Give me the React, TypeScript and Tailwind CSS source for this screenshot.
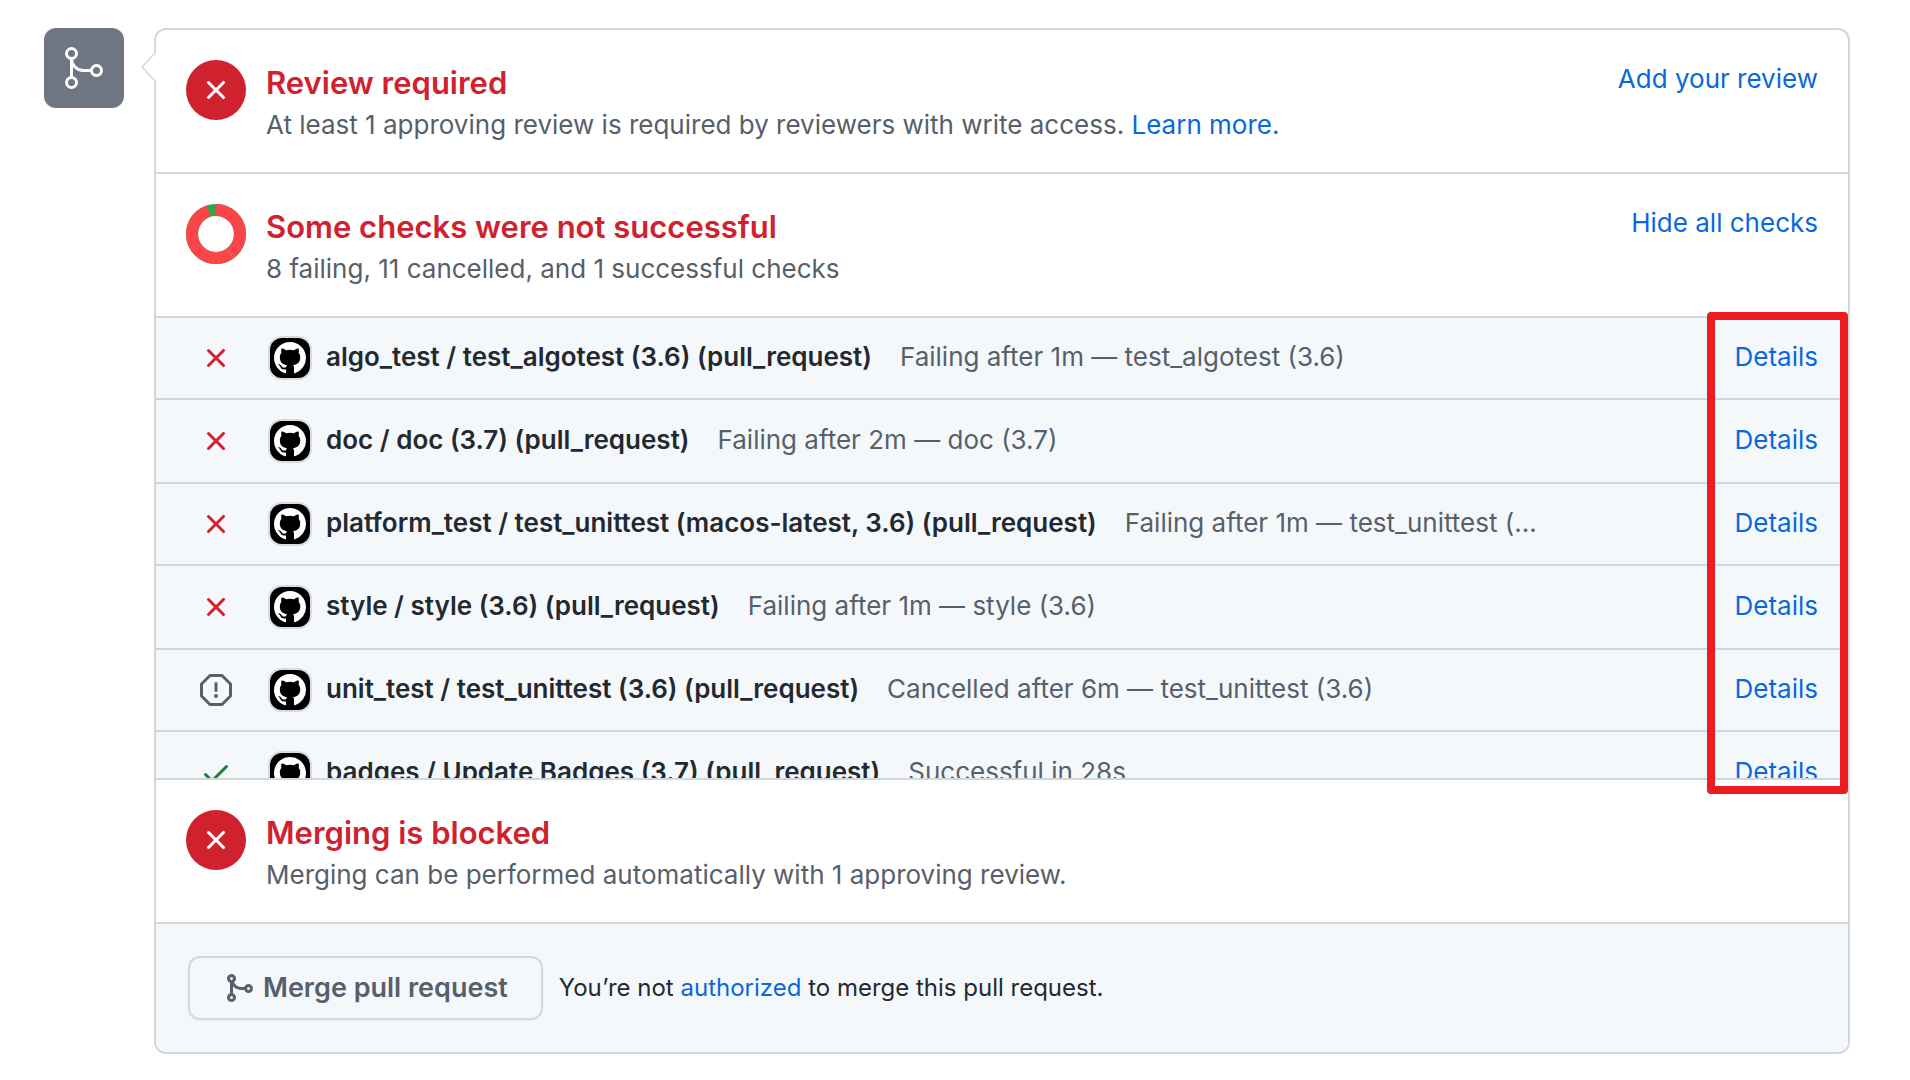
import React from 'react';

const ICONS = {
  x: 'M3.72 3.72a.75.75 0 011.06 0L8 6.94l3.22-3.22a.75.75 0 111.06 1.06L9.06 8l3.22 3.22a.75.75 0 11-1.06 1.06L8 9.06l-3.22 3.22a.75.75 0 01-1.06-1.06L6.94 8 3.72 4.78a.75.75 0 010-1.06z',
  check:
    'M13.78 4.22a.75.75 0 010 1.06l-7.25 7.25a.75.75 0 01-1.06 0L2.22 9.28a.75.75 0 011.06-1.06L6 10.94l6.72-6.72a.75.75 0 011.06 0z',
  stop: 'M4.47.22A.75.75 0 015 0h6a.75.75 0 01.53.22l4.25 4.25c.141.14.22.331.22.53v6a.75.75 0 01-.22.53l-4.25 4.25A.75.75 0 0111 16H5a.75.75 0 01-.53-.22L.22 11.53A.75.75 0 010 11V5a.75.75 0 01.22-.53L4.47.22zm.84 1.28L1.5 5.31v5.38l3.81 3.81h5.38l3.81-3.81V5.31L10.69 1.5H5.31zM8 4a.75.75 0 01.75.75v3.5a.75.75 0 01-1.5 0v-3.5A.75.75 0 018 4zm0 8a1 1 0 100-2 1 1 0 000 2z',
  merge:
    'M5 3.254V3.25v.005a.75.75 0 110-.005v.004zm.45 1.9a2.25 2.25 0 10-1.95.218v5.256a2.25 2.25 0 101.5 0V7.123A5.735 5.735 0 009.25 9h1.378a2.251 2.251 0 100-1.5H9.25a4.25 4.25 0 01-3.8-2.346zM12.75 9a.75.75 0 100-1.5.75.75 0 000 1.5zm-8.5 4.5a.75.75 0 100-1.5.75.75 0 000 1.5z',
  github:
    'M8 0C3.58 0 0 3.58 0 8c0 3.54 2.29 6.53 5.47 7.59.4.07.55-.17.55-.38 0-.19-.01-.82-.01-1.49-2.01.37-2.53-.49-2.69-.94-.09-.23-.48-.94-.82-1.13-.28-.15-.68-.52-.01-.53.63-.01 1.08.58 1.23.82.72 1.21 1.87.87 2.33.66.07-.52.28-.87.51-1.07-1.78-.2-3.64-.89-3.64-3.95 0-.87.31-1.59.82-2.15-.08-.2-.36-1.02.08-2.12 0 0 .67-.21 2.2.82.64-.18 1.32-.27 2-.27.68 0 1.36.09 2 .27 1.53-1.04 2.2-.82 2.2-.82.44 1.1.16 1.92.08 2.12.51.56.82 1.27.82 2.15 0 3.07-1.87 3.75-3.65 3.95.29.25.54.73.54 1.48 0 1.07-.01 1.93-.01 2.2 0 .21.15.46.55.38A8.013 8.013 0 0016 8c0-4.42-3.58-8-8-8z',
};

type IconName = keyof typeof ICONS;

function Icon({ name, className = '' }: { name: IconName; className?: string }) {
  return (
    <svg viewBox="0 0 16 16" aria-hidden="true" className={`size-8 shrink-0 fill-current ${className}`}>
      <path fillRule="evenodd" d={ICONS[name]} />
    </svg>
  );
}

function TimelineBadge() {
  return (
    <div className="flex size-20 shrink-0 items-center justify-center rounded-xl bg-[#6e7781] text-white">
      <svg viewBox="0 0 24 24" aria-hidden="true" className="size-12" fill="none" stroke="currentColor" strokeWidth="1.5">
        <circle cx="5.75" cy="4.75" r="2.5" />
        <circle cx="5.75" cy="19.25" r="2.5" />
        <circle cx="18.25" cy="13.25" r="2.5" />
        <path d="M5.75 7.25v9.5M5.75 7.25a6 6 0 006 6h4" />
      </svg>
    </div>
  );
}

function BlockedBadge() {
  return (
    <div className="flex size-[60px] shrink-0 items-center justify-center rounded-full bg-[#cf222e] text-white">
      <Icon name="x" />
    </div>
  );
}

function ChecksDonut() {
  return (
    <svg viewBox="0 0 60 60" aria-hidden="true" className="size-[60px] shrink-0" fill="none" strokeWidth="12">
      <g transform="rotate(-90 30 30)">
        <circle cx="30" cy="30" r="24" stroke="#2da44e" />
        <circle cx="30" cy="30" r="24" pathLength="100" stroke="#fa4549" strokeDasharray="95 100" />
      </g>
      <path d="M40.6 44.6 47.6 54.3" stroke="#fc8183" strokeWidth="0.5" />
    </svg>
  );
}

function Link({ children, className = '' }: { children: React.ReactNode; className?: string }) {
  return (
    <a href="#" className={`text-[#0969da] hover:underline ${className}`}>
      {children}
    </a>
  );
}

interface SectionProps {
  icon: React.ReactNode;
  title: string;
  action?: React.ReactNode;
  children: React.ReactNode;
}

function Section({ icon, title, action, children }: SectionProps) {
  return (
    <section className="flex gap-5 px-[30px] pt-[30px] pb-7">
      {icon}
      <div className="min-w-0 grow">
        <h3 className="text-[31px] leading-[46px] font-semibold text-[#cf222e]">{title}</h3>
        <p className="text-[26px] leading-[38px] text-[#57606a]">{children}</p>
      </div>
      {action && <div className="text-[26px] leading-[38px] whitespace-nowrap">{action}</div>}
    </section>
  );
}

interface Check {
  name: string;
  status: string;
  state: IconName;
}

const CHECKS: Check[] = [
  { name: 'algo_test / test_algotest (3.6) (pull_request)', status: 'Failing after 1m — test_algotest (3.6)', state: 'x' },
  { name: 'doc / doc (3.7) (pull_request)', status: 'Failing after 2m — doc (3.7)', state: 'x' },
  {
    name: 'platform_test / test_unittest (macos-latest, 3.6) (pull_request)',
    status: 'Failing after 1m — test_unittest (macos-latest, 3.6)',
    state: 'x',
  },
  { name: 'style / style (3.6) (pull_request)', status: 'Failing after 1m — style (3.6)', state: 'x' },
  { name: 'unit_test / test_unittest (3.6) (pull_request)', status: 'Cancelled after 6m — test_unittest (3.6)', state: 'stop' },
  { name: 'badges / Update Badges (3.7) (pull_request)', status: 'Successful in 28s', state: 'check' },
];

const STATE_COLOR: Partial<Record<IconName, string>> = {
  x: 'text-[#cf222e]',
  stop: 'text-[#57606a]',
  check: 'text-[#1a7f37]',
};

function CheckRow({ name, status, state }: Check) {
  return (
    <li className="flex items-center border-b-2 border-[#d0d7de] pr-[30px] pl-11 odd:h-[82px] even:h-[84px]">
      <Icon name={state} className={STATE_COLOR[state]} />
      <span className="mr-4 ml-[38px] flex size-10 shrink-0 items-center justify-center rounded-xl bg-black text-white ring-2 ring-[#d8dce0]">
        <Icon name="github" />
      </span>
      <p className="mr-48 flex min-w-0 grow gap-7 pb-0.5 text-[26px] leading-[38px] whitespace-nowrap">
        <strong className="font-semibold text-[#24292f]">{name}</strong>
        <span className="truncate text-[#57606a]">{status}</span>
      </p>
      <Link className="pb-0.5 text-[26px] leading-[38px]">Details</Link>
    </li>
  );
}

export default function App() {
  return (
    <main className="flex min-h-screen items-start gap-[30px] bg-white py-7 pr-[60px] pl-11 font-['Inter','Liberation_Sans',sans-serif]">
      <TimelineBadge />
      <div className="relative min-w-0 grow rounded-xl border-2 border-[#d0d7de]">
        <svg viewBox="0 0 16 32" aria-hidden="true" className="absolute top-[21px] -left-4 h-8 w-4">
          <path d="M16 1 2 16l14 15" fill="#fff" stroke="#d0d7de" strokeWidth="1.5" />
        </svg>
        <Section icon={<BlockedBadge />} title="Review required" action={<Link>Add your review</Link>}>
          At least 1 approving review is required by reviewers with write access. <Link>Learn more.</Link>
        </Section>
        <div className="relative border-y-2 border-[#d0d7de]">
          <Section
            icon={<ChecksDonut />}
            title="Some checks were not successful"
            action={
              <button type="button" className="text-[#0969da]">
                Hide all checks
              </button>
            }
          >
            8 failing, 11 cancelled, and 1 successful checks
          </Section>
          <ul className="h-[462px] overflow-hidden border-t-2 border-[#d0d7de] bg-[#f4f8fb]">
            {CHECKS.map((check) => (
              <CheckRow key={check.name} {...check} />
            ))}
          </ul>
          <div
            aria-hidden="true"
            className="pointer-events-none absolute right-0 -bottom-4 h-[482px] w-[141px] rounded-sm border-8 border-[#ec1c20]"
          />
        </div>
        <Section icon={<BlockedBadge />} title="Merging is blocked">
          Merging can be performed automatically with 1 approving review.
        </Section>
        <footer className="flex items-center gap-4 rounded-b-[10px] border-t-2 border-[#d0d7de] bg-[#f4f8fb] px-8 py-8">
          <button
            type="button"
            className="flex items-center gap-2 rounded-xl border-2 border-[#d3d8db] px-[33px] py-[10px] text-[27px] leading-10 font-semibold text-[#57606a] shadow-xs"
          >
            <Icon name="merge" />
            Merge pull request
          </button>
          <p className="text-2xl leading-9 text-[#24292f]">
            You’re not <Link>authorized</Link> to merge this pull request.
          </p>
        </footer>
      </div>
    </main>
  );
}
